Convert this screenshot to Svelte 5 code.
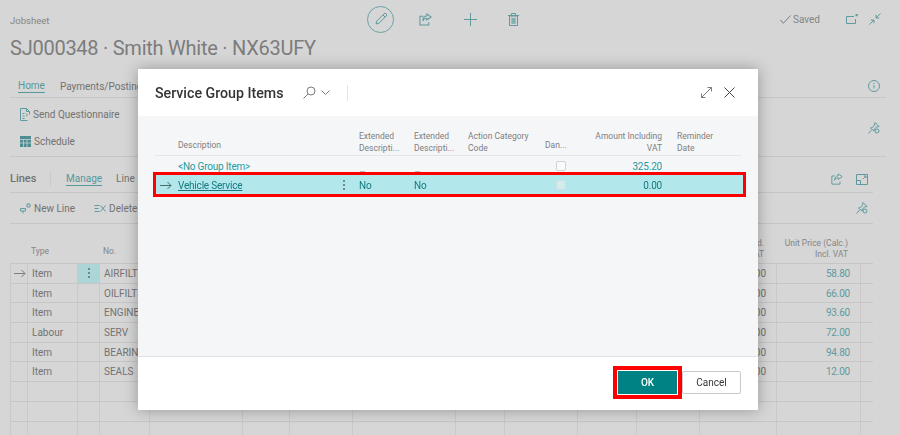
<script>
  const cols = [17, 50, 22, 50, 93, 47, 63, 103, 49, 73, 59, 63, 77, 84, 13];
  const template = cols.map((c) => c + 'px').join(' ');

  const lines = [
    { type: 'Item', no: 'AIRFILTER', price: '58.80', current: true },
    { type: 'Item', no: 'OILFILTER', price: '66.00' },
    { type: 'Item', no: 'ENGINEOIL', price: '93.60' },
    { type: 'Labour', no: 'SERV', price: '72.00' },
    { type: 'Item', no: 'BEARING', price: '94.80' },
    { type: 'Item', no: 'SEALS', price: '12.00' },
    {},
    {},
    {}
  ];
</script>

<div class="page">
  <header class="top">
    <div class="crumb">Jobsheet</div>
    <div class="actions">
      <span class="edit">
        <svg width="14" height="14" viewBox="0 0 14 14"><path d="M2 12l.8-3L10 1.800a1.300 1.300 0 0 1 2.200 2.200L5 11.200z M9 3l2 2" /></svg>
      </span>
      <svg class="ic share" width="13" height="13" viewBox="0 0 14 14"><path class="heavy" d="M8.500 1l4.500 3.300-4.500 3.200V5.600C6.500 5.600 5 6.500 4.200 8.500 4.200 5.500 6 3.200 8.500 3z M4.500 3.500H1v9.500h9.500V10" /></svg>
      <svg class="ic plus" width="13" height="13" viewBox="0 0 13 13"><path d="M6.500 0v13M0 6.500h13" /></svg>
      <svg class="ic trash" width="11" height="13" viewBox="0 0 11 13"><path d="M1.500 3h8v9.500h-8z M0 2.500h11M3.500 2.500V.5h4v2" /><rect x="3.300" y="4.800" width="4.400" height="6" fill="#7fb0b3" /></svg>
    </div>
    <div class="status">
      <svg class="ic" width="11" height="9" viewBox="0 0 11 9"><path class="grey" d="M.5 5l2.800 3.300L10.500.5" /></svg>
      <span>Saved</span>
      <svg class="ic pop" width="12" height="10" viewBox="0 0 12 10"><path d="M8 2.500H.5v7h9V5" /><rect x="9.500" y="0" width="2.200" height="2.200" fill="#5f9a9e" /></svg>
      <svg class="ic" width="12" height="12" viewBox="0 0 12 12"><path d="M11.500.5L7 5M7 1.800V5h3.200M.5 11.500L5 7M1.800 7H5v3.200" /></svg>
    </div>
  </header>

  <h1>SJ000348 · Smith White · NX63UFY</h1>

  <nav class="tabs">
    <span class="active">Home</span>
    <span>Payments/Posting</span>
    <svg class="ic end edge" width="12" height="12" viewBox="0 0 12 12"><circle cx="6" cy="6" r="5.500" /><path d="M6 5v3.500M6 3v1" /></svg>
  </nav>

  <section class="ribbon">
    <div class="ribbon-items">
      <div class="cmd">
        <svg class="ic" width="10" height="13" viewBox="0 0 10 13"><path d="M.5.500h6l3 3v3M.5.500v12h7 M6.500.500v3h3M2.500 5.500h2M2.500 8h2M2.500 10.500h2M6 5.500l1.500 1.500L6 8.500" /></svg>
        Send Questionnaire
      </div>
      <div class="cmd">
        <svg width="11" height="11" viewBox="0 0 11 11"><rect width="11" height="11" fill="#4f8f93" /><path d="M0 3.500h11M0 7h11M3.500 3.500V11M7 3.500V11" stroke="#d6d6d6" stroke-width=".7" /></svg>
        Schedule
      </div>
    </div>
    <svg class="ic end edge" width="12" height="12" viewBox="0 0 12 12"><path d="M7 .5l4 4-2.500.5L6.500 7l-.5 2L2.500 6l2-.5L6.500 3z M3.500 8L.5 11.500" /><circle cx="9" cy="9" r="2" /></svg>
  </section>

  <section class="lines-bar">
    <strong>Lines</strong>
    <i class="sep"></i>
    <span class="active">Manage</span>
    <span class="plain">Line</span>
    <svg class="ic end" width="12" height="12" viewBox="0 0 14 14"><path class="heavy" d="M8.500 1l4.500 3.300-4.500 3.200V5.600C6.500 5.600 5 6.500 4.200 8.500 4.200 5.500 6 3.200 8.500 3z M4.500 3.500H1v9.500h9.500V10" /></svg>
    <svg class="ic boxed" width="12" height="11" viewBox="0 0 12 11"><path d="M.5.500h11v10H.5z M.5 6.500h4v4M7 5l3-3M8 2h2v2" /></svg>
  </section>

  <section class="line-cmds">
    <div class="cmd">
      <svg class="ic" width="11" height="11" viewBox="0 0 11 11"><path d="M.5 5.500h5v2.500h-5zM3 8v2.500" /><path d="M7 1h3v3H7z" /></svg>
      New Line
    </div>
    <div class="cmd">
      <svg class="ic" width="12" height="11" viewBox="0 0 12 11"><path d="M.5 2.500h5M.5 5.500h4M.5 8.500h5M6.500 2.500l5 6M11.500 2.500l-5 6" /></svg>
      Delete
    </div>
    <svg class="ic end edge" width="12" height="12" viewBox="0 0 12 12"><path d="M7 .5l4 4-2.500.5L6.500 7l-.5 2L2.500 6l2-.5L6.500 3z M3.500 8L.5 11.500" /><circle cx="9" cy="9" r="2" /></svg>
  </section>

  <div class="grid-head" style="grid-template-columns: {template}">
    <span></span>
    <span class="th low">Type</span>
    <span></span>
    <span class="th low">No.</span>
    <span></span><span></span><span></span><span></span><span></span><span></span><span></span><span></span>
    <span class="th right">Unit Cost Excld.<br />Excl. VAT</span>
    <span class="th right">Unit Price (Calc.)<br />Incl. VAT</span>
  </div>
  <div class="grid">
    {#each lines as line}
      <div class="grid-row" style="grid-template-columns: {template}">
        <span class="cell arrow">
          {#if line.current}
            <svg class="ic grey-svg" width="12" height="9" viewBox="0 0 12 9"><path d="M0 4.500h11M7.500 1l3.500 3.500L7.500 8" /></svg>
          {/if}
        </span>
        <span class="cell">{line.type ?? ''}</span>
        <span class="cell dots" class:on={line.current}>{#if line.current}<b></b><b></b><b></b>{/if}</span>
        <span class="cell">{line.no ?? ''}</span>
        <span class="cell"></span><span class="cell"></span><span class="cell"></span><span class="cell"></span>
        <span class="cell"></span><span class="cell"></span><span class="cell"></span><span class="cell"></span>
        <span class="cell right">{line.no ? '0.00' : ''}</span>
        <span class="cell right teal">{line.price ?? ''}</span>
        <span class="cell"></span>
      </div>
    {/each}
  </div>
</div>

<div class="modal" role="dialog">
  <div class="modal-head">
    <h2>Service Group Items</h2>
    <svg class="m-ic search" width="13" height="13" viewBox="0 0 13 13"><circle cx="8" cy="5" r="4" /><path d="M5 8L.5 12.500" /></svg>
    <svg class="m-ic" width="9" height="5" viewBox="0 0 9 5"><path d="M.5.500l4 4 4-4" /></svg>
    <i class="m-sep"></i>
    <svg class="m-ic grow" width="11" height="11" viewBox="0 0 11 11"><path d="M.5 10.500l10-10M6.500.5h4v4M.5 6.500v4h4" /></svg>
    <svg class="m-ic close" width="11" height="11" viewBox="0 0 11 11"><path class="dark" d="M.5.500l10 10M10.500.5l-10 10" /></svg>
  </div>

  <div class="modal-body">
    <div class="list-head">
      <span></span>
      <span class="lh low">Description</span>
      <span class="lh">Extended<br />Descripti...</span>
      <span class="lh">Extended<br />Descripti...</span>
      <span class="lh">Action Category<br />Code</span>
      <span class="lh low">Dan...</span>
      <span class="lh right">Amount Including<br />VAT</span>
      <span class="lh">Reminder<br />Date</span>
    </div>
    <div class="list-row first">
      <span></span>
      <span class="link">&lt;No Group Item&gt;</span>
      <span class="dash"></span>
      <span class="dash"></span>
      <span></span>
      <span><i class="check"></i></span>
      <span class="right link">325.20</span>
      <span></span>
    </div>
    <div class="list-row selected">
      <span class="row-arrow">
        <svg width="12" height="9" viewBox="0 0 12 9"><path d="M0 4.500h11M7.500 1l3.500 3.500L7.500 8" /></svg>
      </span>
      <span class="desc">
        <span class="underlined">Vehicle Service</span>
        <span class="kebab"><b></b><b></b><b></b></span>
      </span>
      <span>No</span>
      <span>No</span>
      <span></span>
      <span><i class="check faded"></i></span>
      <span class="right">0.00</span>
      <span></span>
    </div>
  </div>

  <div class="modal-foot">
    <button class="ok">OK</button>
    <button class="cancel">Cancel</button>
  </div>
</div>

<style>
  :global(body) {
    margin: 0;
    background: #d6d6d6;
    overflow: hidden;
  }

  .page {
    width: 900px;
    height: 435px;
    padding: 0 14px 0 10px;
    box-sizing: border-box;
    overflow: hidden;
    font-family: Roboto, "Open Sans", sans-serif;
    font-size: 10px;
    color: #727272;
  }

  .ic path, .ic circle {
    fill: none;
    stroke: #5f9a9e;
    stroke-width: 1;
  }

  .ic path.grey, .grey-svg path {
    stroke: #7d7d7d;
  }

  .ic path.heavy {
    stroke-width: 1.100;
  }

  .top {
    display: flex;
    align-items: center;
    height: 38px;
  }

  .crumb {
    width: 357px;
    margin-top: 2px;
    font-size: 9.500px;
    color: #858585;
  }

  .actions {
    display: flex;
    align-items: center;
  }

  .edit {
    display: flex;
    align-items: center;
    justify-content: center;
    width: 25px;
    height: 25px;
    border: 1px solid #68a3a6;
    border-radius: 50%;
  }

  .edit path {
    fill: none;
    stroke: #5f9a9e;
  }

  .share { margin-left: 25px; }
  .plus { margin-left: 32px; }
  .trash { margin-left: 31px; }

  .status {
    display: flex;
    align-items: center;
    margin-left: auto;
    padding-right: 5px;
    color: #858585;
  }

  .status span { margin: 1px 0 0 2px; }
  .pop { margin: 0 11px 0 26px; }

  h1 {
    margin: 0;
    height: 37px;
    font-size: 20px;
    font-weight: 400;
    line-height: 20px;
    color: #7c7c7c;
    letter-spacing: -0.25px;
  }

  .tabs {
    display: flex;
    align-items: center;
    gap: 15px;
    height: 22px;
    padding-left: 8px;
    border-bottom: 1px solid #c6c6c6;
  }

  .active {
    color: #56989c;
    border-bottom: 1px solid #56989c;
    line-height: 13px;
  }

  .end { margin-left: auto; }
  .edge { margin-right: 6px; }

  .ribbon {
    display: flex;
    align-items: center;
    height: 59px;
    padding: 1px 0 0 10px;
    box-sizing: border-box;
    border-bottom: 1px solid #c6c6c6;
  }

  .ribbon-items {
    display: flex;
    flex-direction: column;
    gap: 13px;
  }

  .cmd {
    display: flex;
    align-items: center;
    gap: 3px;
    height: 14px;
  }

  .lines-bar {
    display: flex;
    align-items: flex-end;
    height: 36px;
    margin-right: 13px;
    padding: 0 5px 6px 0;
    box-sizing: border-box;
    border-bottom: 1px solid #c6c6c6;
    gap: 15px;
  }

  .lines-bar strong {
    font-size: 11px;
    font-weight: 500;
    line-height: 14px;
    width: 25px;
  }

  .lines-bar .plain {
    line-height: 14px;
    margin-left: -1px;
  }

  .lines-bar .ic { margin-bottom: 1px; }
  .lines-bar .boxed { margin-left: -2px; }

  .sep {
    width: 1px;
    height: 15px;
    background: #c9c9c9;
  }

  .line-cmds {
    display: flex;
    align-items: center;
    gap: 19px;
    height: 31px;
    margin-right: 13px;
    padding-left: 10px;
    box-sizing: border-box;
    border-bottom: 1px solid #c6c6c6;
  }

  .line-cmds .edge { margin-right: 5px; }

  .grid-head {
    display: grid;
    align-items: end;
    height: 40px;
    padding-bottom: 3px;
    box-sizing: border-box;
    border-bottom: 1px solid #c6c6c6;
    width: 863px;
  }

  .th {
    font-size: 8.500px;
    color: #858585;
    line-height: 11px;
    padding-left: 4px;
    white-space: nowrap;
  }

  .th.low { padding-bottom: 3px; }

  .th.right {
    text-align: right;
    padding: 0 12px 0 0;
  }

  .grid { width: 863px; }

  .grid-row {
    display: grid;
    height: 19.700px;
    box-sizing: border-box;
    border-bottom: 1px solid #c6c6c6;
  }

  .cell {
    display: flex;
    align-items: center;
    padding-left: 4px;
    border-left: 1px solid #c9c9c9;
    white-space: nowrap;
  }

  .cell.arrow { padding-left: 3px; }

  .cell.right {
    justify-content: flex-end;
    padding: 0 10px 0 0;
  }

  .teal { color: #5f9a9e; letter-spacing: -0.2px; }

  .dots {
    flex-direction: column;
    justify-content: center;
    gap: 2px;
    padding: 0;
  }

  .dots.on { background: #acd5d8; }

  .dots b, .kebab b {
    display: block;
    width: 2px;
    height: 2px;
    border-radius: 50%;
    background: #5c6f70;
  }

  .modal {
    position: fixed;
    left: 138px;
    top: 69px;
    width: 620px;
    height: 341px;
    display: flex;
    flex-direction: column;
    background: #fff;
    box-shadow: 0 0 14px rgba(0, 0, 0, 0.3);
    font-family: Roboto, "Open Sans", sans-serif;
    color: #444;
  }

  .modal-head {
    display: flex;
    align-items: center;
    height: 47px;
    padding: 0 23px 0 17px;
    box-sizing: border-box;
    flex: none;
  }

  h2 {
    margin: 0;
    width: 148px;
    font-size: 14.200px;
    font-weight: 500;
    color: #333;
  }

  .m-ic path, .m-ic circle {
    fill: none;
    stroke: #7c7c7c;
    stroke-width: 1;
  }

  .m-ic path.dark { stroke: #444; }
  .search { margin-right: 5px; }

  .m-sep {
    width: 1px;
    height: 16px;
    margin-left: 17px;
    background: #e4e4e4;
  }

  .grow { margin-left: auto; }
  .close { margin-left: 12px; }

  .modal-body {
    flex: 1;
    background: #f5f6f8;
    padding: 0 17px;
  }

  .list-head, .list-row {
    display: grid;
    grid-template-columns: 23px 181px 55px 54px 77px 46px 71px 1fr;
  }

  .list-head {
    align-items: end;
    height: 40px;
    padding-bottom: 1px;
    box-sizing: border-box;
    border-bottom: 1px solid #e3e5e7;
  }

  .lh {
    font-size: 8.500px;
    line-height: 12px;
    color: #7e7e7e;
    white-space: nowrap;
  }

  .lh.low { padding-bottom: 3px; }

  .lh.right, .list-row .right {
    text-align: right;
  }

  .lh:nth-child(8) { padding-left: 15px; }

  .list-row {
    height: 19px;
    padding-top: 1px;
    align-items: center;
    font-size: 10px;
    letter-spacing: -0.2px;
    box-sizing: border-box;
  }

  .link { color: #1f9a9f; }

  .dash {
    align-self: end;
    width: 5px;
    height: 1px;
    margin: 0 0 3px 1px;
    background: #bcbcbc;
  }

  .check {
    display: block;
    width: 8px;
    height: 8px;
    margin-left: 11px;
    border: 1px solid #d2d2d2;
    border-radius: 2px;
    background: #fbfbfb;
  }

  .check.faded {
    background: #d2ecee;
    border-color: #cfdfe0;
  }

  .selected {
    grid-template-columns: 22px 181px 55px 54px 77px 46px 71px 1fr;
    margin: 0 -2px 0 1px;
    background: #b2e8ec;
    color: #14797e;
    outline: 3px solid #f00;
  }

  .row-arrow {
    display: flex;
    padding-left: 4px;
  }

  .row-arrow path {
    fill: none;
    stroke: #4d6c6e;
  }

  .desc {
    display: flex;
    align-items: center;
    justify-content: space-between;
    padding-right: 14px;
  }

  .underlined { text-decoration: underline; }

  .kebab {
    display: flex;
    flex-direction: column;
    gap: 2px;
  }

  .modal-foot {
    display: flex;
    justify-content: flex-end;
    align-items: flex-start;
    gap: 5px;
    height: 54px;
    padding: 14px 17px 0;
    box-sizing: border-box;
    flex: none;
    border-top: 1px solid #dfe2e2;
  }

  button {
    width: 59px;
    height: 23px;
    padding: 0;
    font-family: inherit;
    font-size: 10px;
  }

  .ok {
    background: #008284;
    border: none;
    color: #fff;
    font-weight: 500;
    outline: 4px solid #f00;
    outline-offset: 1px;
  }

  .cancel {
    background: #fff;
    border: 1px solid #c8c8c8;
    border-radius: 2px;
    color: #333;
  }
</style>
